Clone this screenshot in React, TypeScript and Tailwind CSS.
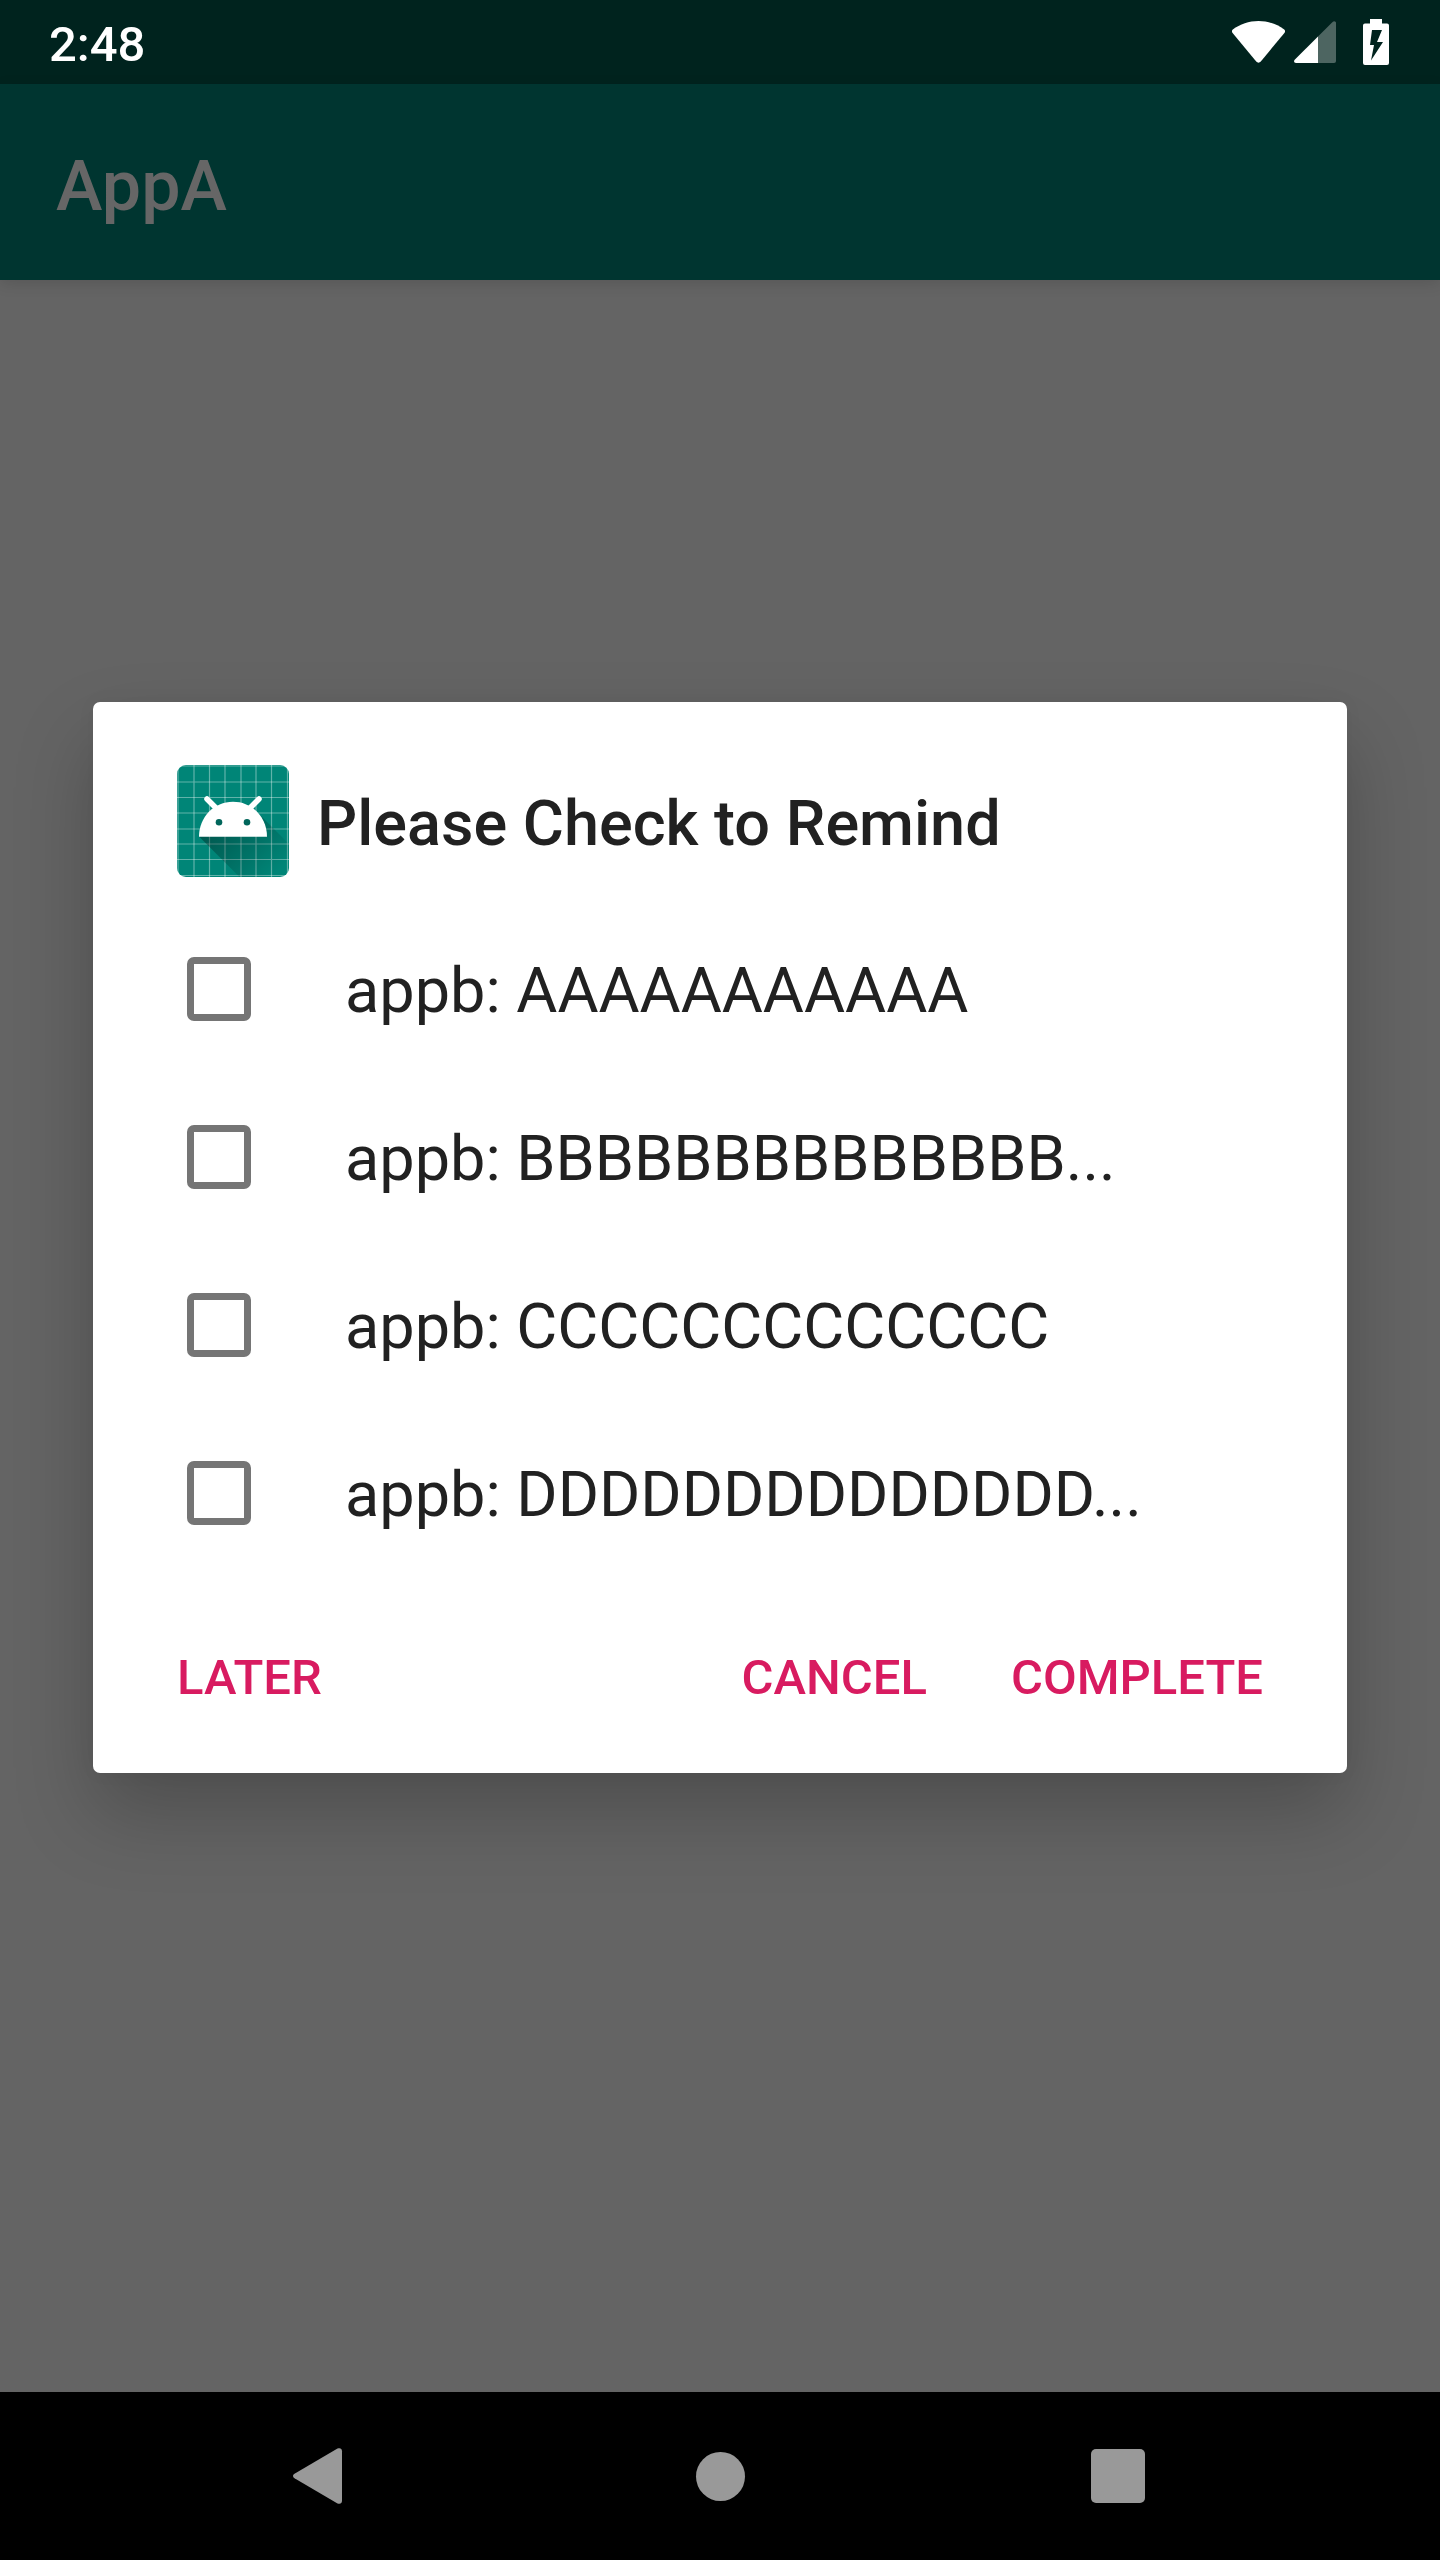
import React from "react";

const reminders = [
  { id: "a", label: "appb: AAAAAAAAAAA" },
  { id: "b", label: "appb: BBBBBBBBBBBBBB..." },
  { id: "c", label: "appb: CCCCCCCCCCCCC" },
  { id: "d", label: "appb: DDDDDDDDDDDDDD..." },
];

function StatusBar() {
  return (
    <header className="flex h-[84px] shrink-0 items-center justify-between bg-[#00231e] pl-[49px] pr-[51px] text-white">
      <time className="pt-1 text-[49px] leading-none font-medium">2:48</time>
      <div className="flex items-center">
        <svg className="h-[42px] w-[53px]" viewBox="0 0 53 42" fill="currentColor" aria-label="Wi-Fi">
          <path d="M0.8 8.6C8 3 17 0 26.500 0S45 3 52.200 8.600C53.300 9.600 53.400 10.600 52.600 11.700L28.800 40.500C27.500 42 25.500 42 24.200 40.500L0.400 11.700C-0.400 10.600-0.300 9.600 0.800 8.600Z" />
        </svg>
        <svg className="ml-[9px] h-[42px] w-[42px]" viewBox="0 0 42 42" fill="currentColor" aria-label="Mobile signal">
          <path opacity="0.3" d="M24 15.500L38.600 0.900C40 -0.500 42 0.300 42 2V40Q42 42 40 42H24Z" />
          <path d="M24 15.500V42H2C0.200 42-0.600 40.200 0.700 38.800Z" />
        </svg>
        <svg className="ml-[27px] h-[46px] w-[26px]" viewBox="0 0 26 46" fill="currentColor" fillRule="evenodd" aria-label="Battery charging">
          <path d="M7 0H19V4.500H24Q26 4.500 26 6.500V44Q26 46 24 46H2Q0 46 0 44V6.500Q0 4.500 2 4.500H7ZM9 11L7 26H11L8 41.500L20 23H14L19 11Z" />
        </svg>
      </div>
    </header>
  );
}

function LauncherIcon() {
  const lines = [1, 17, 32.5, 48, 64, 79, 94.5, 110.5];
  return (
    <svg className="h-28 w-28 shrink-0" viewBox="0 0 112 112" aria-hidden="true">
      <defs>
        <clipPath id="tile">
          <rect width="112" height="112" rx="9" />
        </clipPath>
        <linearGradient id="cast" gradientUnits="userSpaceOnUse" x1="40" y1="55" x2="96" y2="111">
          <stop offset="0" stopOpacity="0.34" />
          <stop offset="1" stopOpacity="0" />
        </linearGradient>
      </defs>
      <g clipPath="url(#tile)">
        <rect width="112" height="112" fill="#008577" />
        <g stroke="#fff" strokeOpacity="0.38" strokeWidth="1.2">
          {lines.map((p) => (
            <path key={p} d={`M${p} 0V112M0 ${p}H112`} />
          ))}
        </g>
        <path d="M22 71.500L62.500 112H112V79L84.500 51.500L60 40Z" fill="url(#cast)" />
      </g>
      <path d="M22 71.700C22 52 37 36.700 56 36.700S90 52 90 71.700Z" fill="#fff" />
      <path d="M30 34L39 43M82 34L73 43" stroke="#fff" strokeWidth="5.500" strokeLinecap="round" />
      <circle cx="42" cy="57.300" r="3.300" fill="#00665b" />
      <circle cx="70" cy="57.300" r="3.300" fill="#00665b" />
    </svg>
  );
}

function DialogButton({ children }: { children: React.ReactNode }) {
  return (
    <button type="button" className="h-[168px] px-[42px] pt-1 text-[49px] leading-none font-medium text-[#d81b60]">
      {children}
    </button>
  );
}

function ReminderDialog() {
  return (
    <section
      role="dialog"
      aria-labelledby="dialog-title"
      className="w-full rounded-[7px] bg-white text-[#212121] shadow-[0_40px_80px_rgba(0,0,0,0.22),0_0_20px_rgba(0,0,0,0.04)]"
    >
      <div className="flex items-center gap-7 px-[84px] pt-[63px] pb-7">
        <LauncherIcon />
        <h2 id="dialog-title" className="pt-1 text-[63px] leading-none font-medium">
          Please Check to Remind
        </h2>
      </div>
      <ul>
        {reminders.map(({ id, label }) => (
          <li key={id}>
            <label className="flex h-[168px] items-center gap-[94px] px-[94px]">
              <input
                type="checkbox"
                className="h-16 w-16 shrink-0 appearance-none rounded-[7px] border-[7px] border-[#757575] checked:bg-[#d81b60]"
              />
              <span className="truncate pt-1 text-[63px] leading-[84px]">{label}</span>
            </label>
          </li>
        ))}
      </ul>
      <div className="flex justify-between px-[42px] py-3.5">
        <DialogButton>LATER</DialogButton>
        <div className="flex">
          <DialogButton>CANCEL</DialogButton>
          <DialogButton>COMPLETE</DialogButton>
        </div>
      </div>
    </section>
  );
}

function NavigationBar() {
  return (
    <nav className="flex h-[168px] shrink-0 bg-black px-[123px] text-[#999]">
      <button type="button" aria-label="Back" className="flex flex-1 items-center justify-center">
        <svg className="h-14 w-[58px]" viewBox="0 0 58 56" fill="currentColor">
          <path d="M1.500 25.800L44.500 0.600C47 -0.600 49 0.600 49 3.200V52.800C49 55.400 47 56.600 44.500 55.400L1.500 30.200C-0.500 29-0.500 27 1.500 25.800Z" />
        </svg>
      </button>
      <button type="button" aria-label="Home" className="flex flex-1 items-center justify-center">
        <span className="h-[49px] w-[49px] rounded-full bg-[#999]" />
      </button>
      <button type="button" aria-label="Recent apps" className="flex flex-1 items-center justify-center">
        <span className="h-[54px] w-[54px] rounded-[5px] bg-[#999]" />
      </button>
    </nav>
  );
}

export default function App() {
  return (
    <div className="flex min-h-screen flex-col bg-[#646464] font-['Roboto',sans-serif]">
      <StatusBar />
      <main className="relative flex flex-1 flex-col">
        <div className="flex h-[196px] items-center bg-[#003530] px-14 shadow-[0_4px_14px_rgba(0,0,0,0.12)]">
          <h1 className="pt-2 text-[70px] leading-none font-medium text-[#666]">AppA</h1>
        </div>
        <div className="absolute inset-0 flex items-center justify-center px-[93px] pb-px">
          <ReminderDialog />
        </div>
      </main>
      <NavigationBar />
    </div>
  );
}
